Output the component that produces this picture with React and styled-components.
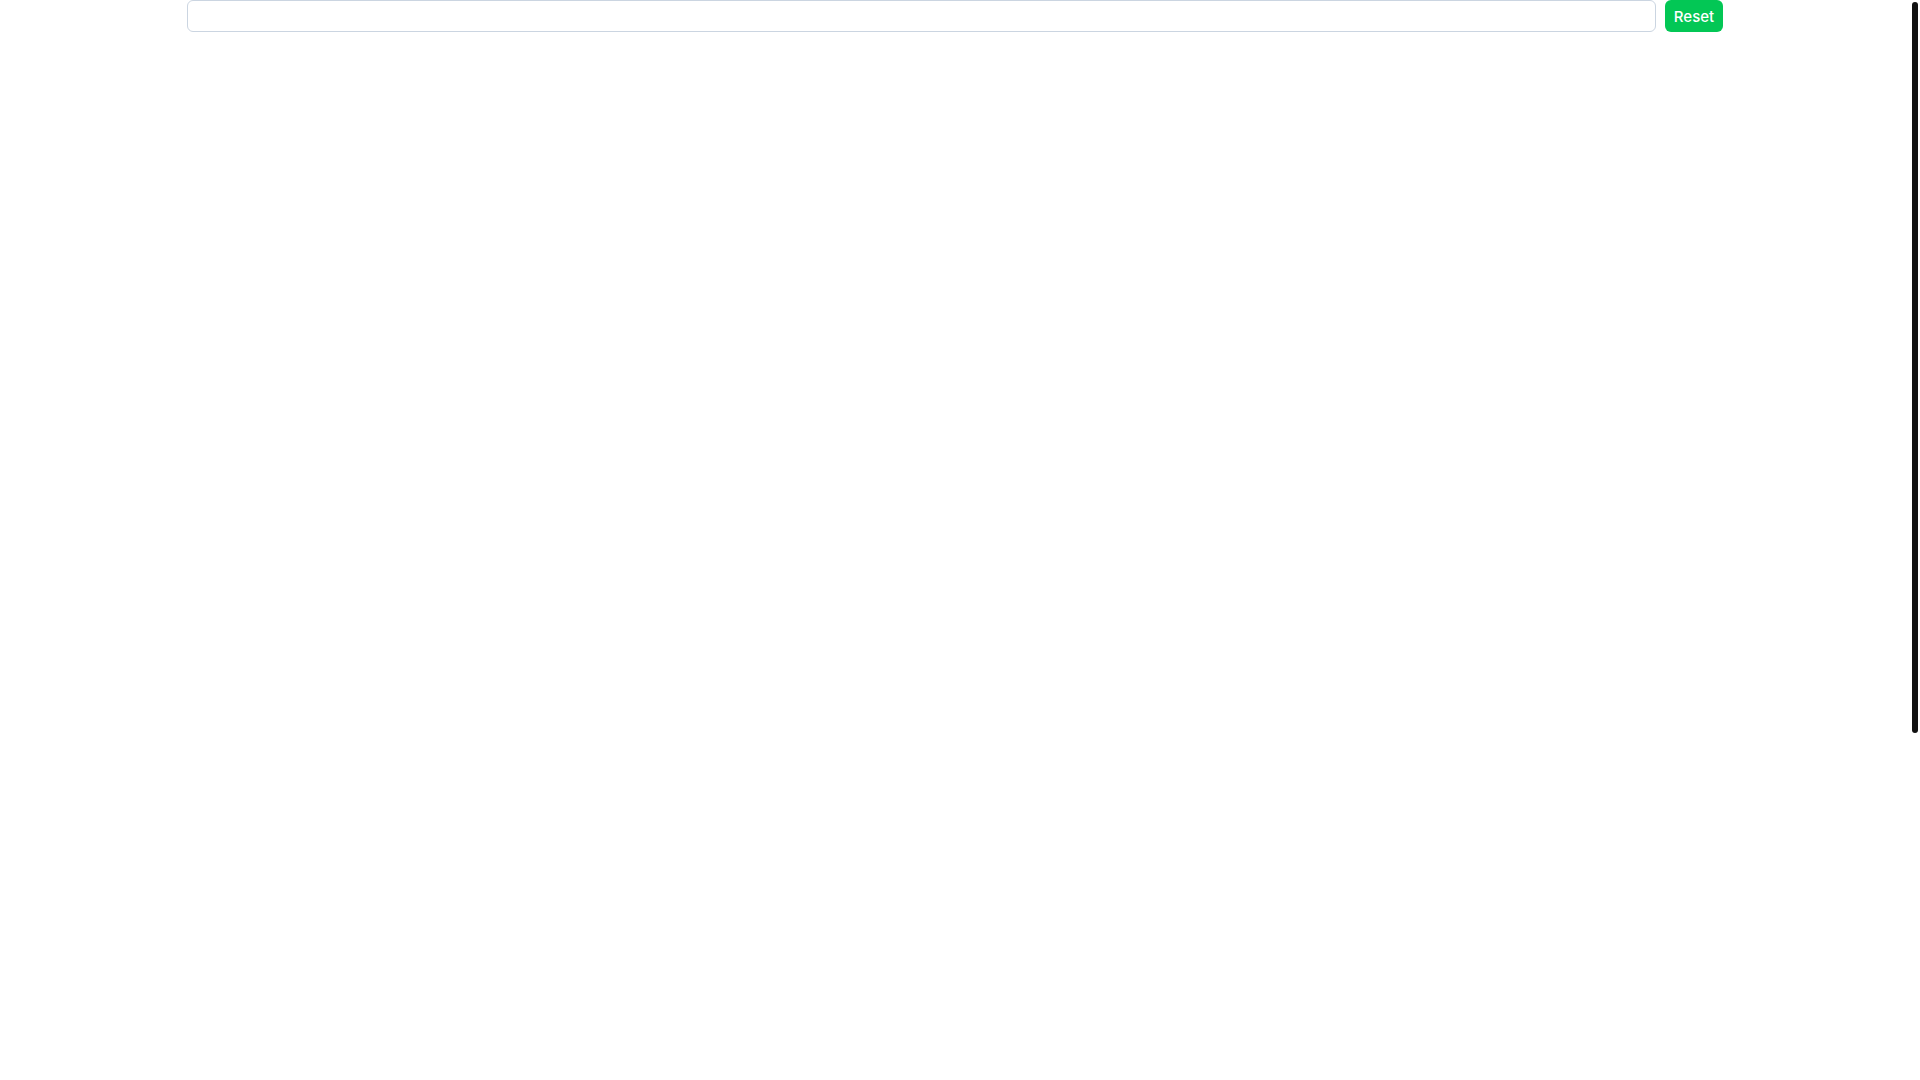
import React from "react";
import styled, { createGlobalStyle } from "styled-components";

const Global = createGlobalStyle`
  html, body { margin: 0; padding: 0; background: #ffffff; }
  body { font-family: Inter, "Noto Sans", "Liberation Sans", sans-serif; }
  body::-webkit-scrollbar { display: none; }
`;

const Page = styled.div`
  min-height: 100vh;
  box-sizing: border-box;
`;

const Toolbar = styled.div`
  display: flex;
  align-items: stretch;
  gap: 9px;
  width: 1536px;
  margin-left: 187px;
  height: 32px;
`;

const SearchInput = styled.input`
  flex: 1;
  box-sizing: border-box;
  height: 32px;
  border: 1px solid #cbd5e1;
  border-radius: 6px;
  padding: 0 10px;
  font-family: inherit;
  font-size: 14px;
  outline: none;
  background: #fff;
`;

const ResetButton = styled.button`
  width: 58px;
  height: 32px;
  border: none;
  border-radius: 6px;
  background: #03c755;
  color: #ffffff;
  font-family: Inter, "Noto Sans", sans-serif;
  font-size: 15px;
  font-weight: 450;
  padding: 0;
  cursor: pointer;
`;

const ScrollThumb = styled.div`
  position: fixed;
  top: 2px;
  right: 2px;
  width: 6px;
  height: 731px;
  border-radius: 3px;
  background: #111111;
`;

export default function App() {
  return (
    <Page>
      <Global />
      <Toolbar>
        <SearchInput type="text" />
        <ResetButton>Reset</ResetButton>
      </Toolbar>
      <ScrollThumb />
    </Page>
  );
}
